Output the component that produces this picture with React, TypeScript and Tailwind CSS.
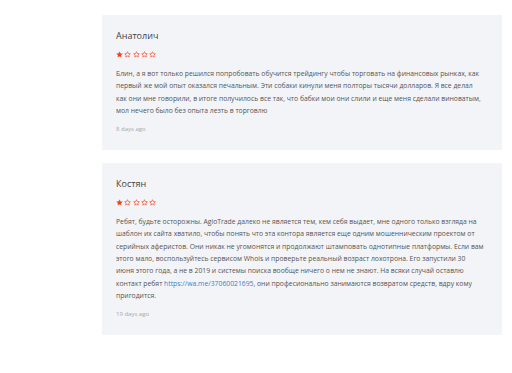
import React from 'react';

interface Review {
  name: string;
  rating: number;
  text: React.ReactNode;
  date: string;
}

const reviews: Review[] = [
  {
    name: 'Анатолич',
    rating: 1,
    text: (
      <>
        Блин, а я вот только решился попробовать обучится трейдингу чтобы торговать на финансовых рынках, как<br />
        первый же мой опыт оказался печальным. Эти собаки кинули меня полторы тысячи долларов. Я все делал<br />
        как они мне говорили, в итоге получилось все так, что бабки мои они слили и еще меня сделали виноватым,<br />
        мол нечего было без опыта лезть в торговлю
      </>
    ),
    date: '8 days ago',
  },
  {
    name: 'Костян',
    rating: 1,
    text: (
      <>
        Ребят, будьте осторожны. AgioTrade далеко не является тем, кем себя выдает, мне одного только взгляда на<br />
        шаблон их сайта хватило, чтобы понять что эта контора является еще одним мошенническим проектом от<br />
        серийных аферистов. Они никак не угомонятся и продолжают штамповать однотипные платформы. Если вам<br />
        этого мало, воспользуйтесь сервисом Whois и проверьте реальный возраст лохотрона. Его запустили 30<br />
        июня этого года, а не в 2019 и системы поиска вообще ничего о нем не знают. На всяки случай оставлю<br />
        контакт ребят <a href="#" className="text-[#3d7fc6]">https://wa.me/37060021695</a>, они професионально занимаются возвратом средств, вдру кому<br />
        пригодится.
      </>
    ),
    date: '19 days ago',
  },
];

const Star = ({ filled }: { filled: boolean }) => (
  <svg viewBox="0 0 24 24" className="w-[7px] h-[7px]">
    <path
      d="M12 2.5l2.9 6.2 6.8.8-5 4.7 1.3 6.7L12 17.6l-6 3.3 1.3-6.7-5-4.7 6.8-.8z"
      fill={filled ? '#f2401c' : 'none'}
      stroke="#f2401c"
      strokeWidth={filled ? 1 : 2.2}
      strokeLinejoin="round"
    />
  </svg>
);

const ReviewCard = ({ review }: { review: Review }) => (
  <div className="w-[400px] bg-[#f3f4f8] px-[14px] pt-[15px] pb-[17px]">
    <div className="text-[9px] leading-[12px] text-[#3f3f3f]">{review.name}</div>
    <div className="flex items-center gap-[1.3px] mt-[8px] h-[8px]">
      {[0, 1, 2, 3, 4].map(i => (
        <Star key={i} filled={i < review.rating} />
      ))}
    </div>
    <p className="mt-[10px] text-[6.8px] leading-[12.3px] text-[#555]">{review.text}</p>
    <div className="mt-[8px] text-[6px] leading-[8px] text-[#a8a8a8]">{review.date}</div>
  </div>
);

export default function App() {
  return (
    <div className="min-h-[373px] w-[512px] bg-white pl-[102px] pt-[15px] font-['Open_Sans',sans-serif]">
      <div className="flex flex-col gap-[13px]">
        {reviews.map((r, i) => (
          <ReviewCard key={i} review={r} />
        ))}
      </div>
    </div>
  );
}
